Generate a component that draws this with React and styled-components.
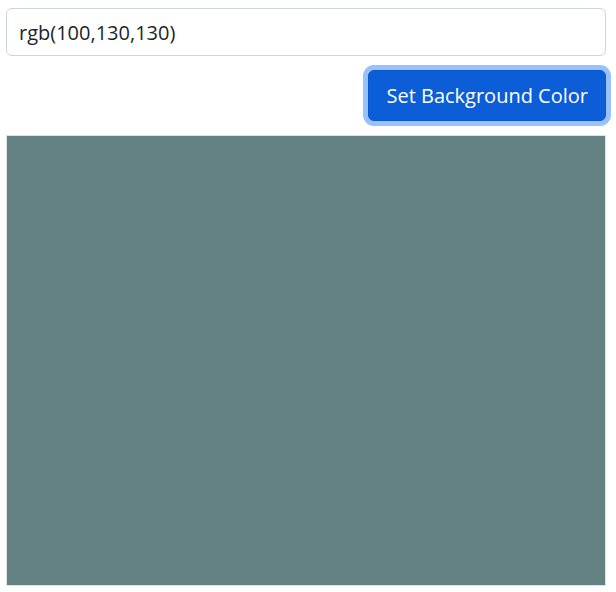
import React, { useState } from 'react';
import styled, { createGlobalStyle } from 'styled-components';

const GlobalStyle = createGlobalStyle`
  * { box-sizing: border-box; }
  body {
    margin: 0;
    background: #fff;
    font-family: "Open Sans", "Noto Sans", sans-serif;
    color: #212529;
  }
`;

const Page = styled.div`
  width: 600px;
  margin: 8px 0 0 6px;
  display: flex;
  flex-direction: column;
`;

const ColorInput = styled.input`
  height: 48px;
  width: 100%;
  padding: 0 12px;
  font-family: inherit;
  font-size: 20px;
  color: #212529;
  border: 1px solid #ced4da;
  border-radius: 6px;
  outline: none;
`;

const Actions = styled.div`
  display: flex;
  justify-content: flex-end;
  margin-top: 14px;
`;

const Button = styled.button`
  height: 51px;
  padding: 0 17px;
  font-family: inherit;
  font-size: 20px;
  color: #fff;
  background: #0b5ed7;
  border: 1px solid #0a58ca;
  border-radius: 6px;
  box-shadow: 0 0 0 5px #98c1fe;
  cursor: pointer;
`;

const Swatch = styled.div`
  margin-top: 14px;
  height: 451px;
  border: 1px solid #dee2e6;
  background: ${props => props.$color};
`;

export default function App() {
  const [value, setValue] = useState('rgb(100,130,130)');
  const [color, setColor] = useState('rgb(100,130,130)');

  return (
    <>
      <GlobalStyle />
      <Page>
        <ColorInput value={value} onChange={e => setValue(e.target.value)} />
        <Actions>
          <Button onClick={() => setColor(value)}>Set Background Color</Button>
        </Actions>
        <Swatch $color={color} />
      </Page>
    </>
  );
}
